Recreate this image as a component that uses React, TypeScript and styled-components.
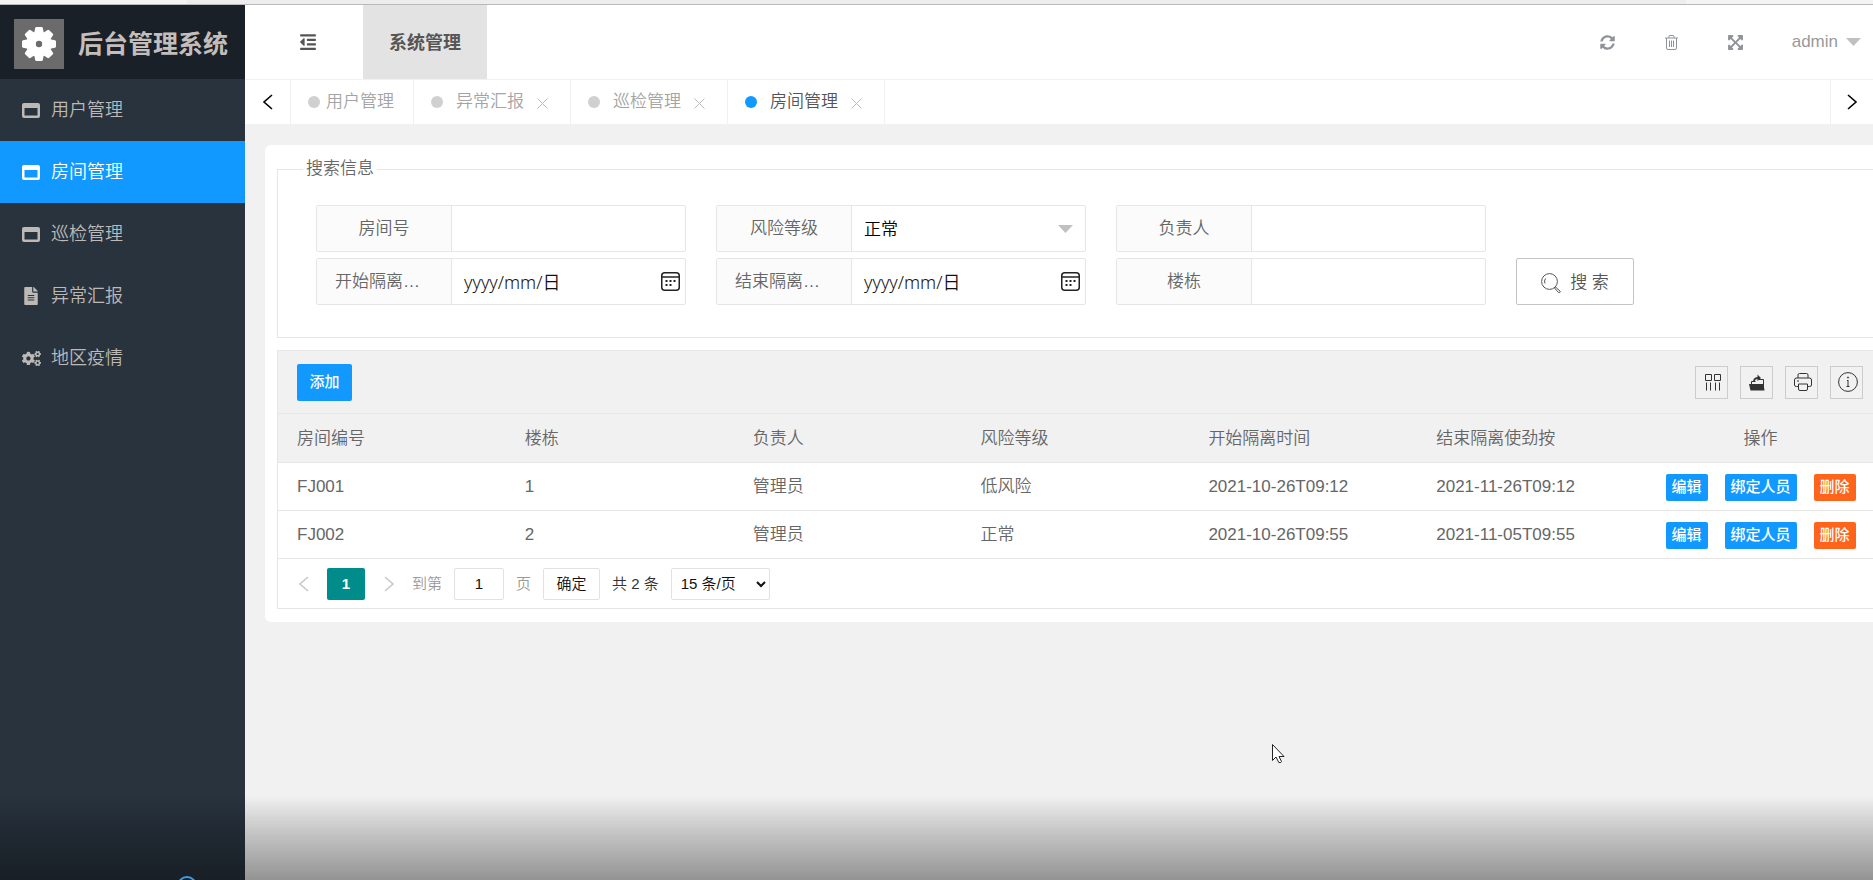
import React from 'react';
import styled, { createGlobalStyle, css } from 'styled-components';
import { FaCogs, FaExpandArrowsAlt, FaFileAlt, FaOutdent, FaSyncAlt } from 'react-icons/fa';

const GlobalStyle = createGlobalStyle`
  *, *::before, *::after { box-sizing: border-box; }
  body {
    margin: 0;
    background: #f1f1f1;
    color: #666;
    font-family: 'Liberation Sans', 'Noto Sans CJK SC', sans-serif;
    font-size: 17px;
    font-weight: 350;
    line-height: 24px;
    overflow: hidden;
  }
  button, input, select { font: inherit; margin: 0; }
  button { cursor: pointer; }
  svg { display: block; flex: none; }
`;

const Page = styled.div`
  display: flex;
  flex-direction: column;
  min-height: 100vh;
`;

const WindowEdge = styled.div`
  height: 5px;
  background: linear-gradient(90deg, #f4f4f4 10%, #ededed 10%, #ededed 90%, #f4f4f4 90%);
  border-bottom: 1px solid #b9b9b9;
`;

const Shell = styled.div`
  display: flex;
  flex: 1;
`;

/* ---------- sidebar ---------- */

const Sidebar = styled.aside`
  width: 245px;
  flex: none;
  background: #28333e;
`;

const Brand = styled.h1`
  display: flex;
  align-items: center;
  gap: 14px;
  height: 74px;
  margin: 0;
  padding: 4px 0 0 14px;
  background: #192027;
  color: #c3bebb;
  font-size: 25px;
  font-weight: 700;
  line-height: 36px;
  white-space: nowrap;
`;

const BrandMark = styled.span`
  display: grid;
  place-items: center;
  width: 50px;
  height: 50px;
  background: #6b6b6b;
`;

const MenuLink = styled.a<{ $active?: boolean }>`
  display: flex;
  align-items: center;
  height: 62px;
  padding-left: 22px;
  color: ${p => (p.$active ? '#fff' : '#bdb9b6')};
  background: ${p => (p.$active ? '#1299ff' : 'transparent')};
  font-size: 18px;
  text-decoration: none;
`;

const MenuIcon = styled.span`
  width: 29px;
`;

/* ---------- header ---------- */

const Main = styled.main`
  flex: 1;
  min-width: 0;
`;

const Header = styled.header`
  display: flex;
  align-items: stretch;
  height: 75px;
  background: #fff;
  border-bottom: 1px solid #f1f1f1;
`;

const IconButton = styled.button`
  display: grid;
  place-items: center;
  width: 64px;
  padding: 0;
  border: 0;
  background: none;
  color: #8f9399;
`;

const FoldButton = styled(IconButton)`
  width: 118px;
  padding-left: 8px;
  color: #555;
`;

const ModuleTab = styled.a`
  display: flex;
  align-items: center;
  justify-content: center;
  width: 124px;
  padding-top: 2px;
  background: #e3e3e3;
  color: #555;
  font-size: 18px;
  font-weight: 700;
  text-decoration: none;
`;

const HeaderTools = styled.div`
  display: flex;
  align-items: stretch;
  margin-left: auto;
  padding-right: 12px;
`;

const UserButton = styled.button`
  display: flex;
  align-items: center;
  gap: 8px;
  margin-left: 24px;
  padding: 0;
  border: 0;
  background: none;
  color: #999;
`;

/* ---------- page tabs ---------- */

const TabBar = styled.nav`
  display: flex;
  height: 44px;
  background: #fff;
`;

const TabArrow = styled.button<{ $side: 'left' | 'right' }>`
  display: grid;
  place-items: center;
  width: ${p => (p.$side === 'left' ? 46 : 43)}px;
  padding: 0;
  border: 0 solid #f1f1f1;
  border-${p => (p.$side === 'left' ? 'right' : 'left')}-width: 1px;
  margin-left: ${p => (p.$side === 'right' ? 'auto' : 0)};
  background: none;
  color: #000;
`;

const Tab = styled.div<{ $active?: boolean; $home?: boolean }>`
  display: flex;
  align-items: center;
  gap: ${p => (p.$home ? 6 : 13)}px;
  padding: 0 ${p => (p.$home ? 19 : 22)}px 0 17px;
  border-right: 1px solid #f1f1f1;
  color: ${p => (p.$active ? '#555' : '#a4a4a4')};
`;

const TabLink = styled.a`
  color: inherit;
  text-decoration: none;
`;

const Dot = styled.span<{ $active?: boolean }>`
  width: 12px;
  height: 12px;
  border-radius: 50%;
  background: ${p => (p.$active ? '#1299ff' : '#d0d0d0')};
`;

const CloseButton = styled.button`
  padding: 2px 0 0;
  border: 0;
  background: none;
  color: #bbb;
`;

/* ---------- content ---------- */

const Card = styled.section`
  margin: 21px 0 0 20px;
  padding: 12px 0 13px 12px;
  background: #fff;
  border-radius: 6px 0 0 6px;
`;

const SearchBox = styled.fieldset`
  margin: 0;
  padding: 24px 0 32px 38px;
  border: 1px solid #e6e6e6;
  border-right: 0;
`;

const Legend = styled.legend`
  margin-left: -13px;
  padding: 0 3px;
`;

const SearchGrid = styled.form`
  display: grid;
  grid-template-columns: repeat(3, 370px) auto;
  justify-content: start;
  gap: 6px 30px;
`;

const Field = styled.div`
  display: flex;
  height: 47px;
  border: 1px solid #e6e6e6;
  border-radius: 2px;
`;

const FieldLabel = styled.label`
  width: 135px;
  flex: none;
  padding: 0 18px;
  overflow: hidden;
  border-right: 1px solid #e6e6e6;
  background: #fbfbfb;
  line-height: 46px;
  text-align: center;
  text-overflow: ellipsis;
  white-space: nowrap;
`;

const Control = styled.div`
  position: relative;
  display: flex;
  flex: 1;
  min-width: 0;
`;

const controlText = css`
  width: 100%;
  min-width: 0;
  padding: 2px 12px 0;
  border: 0;
  outline: 0;
  background: none;
  color: #000;
`;

const TextInput = styled.input`
  ${controlText}
`;

const DateInput = styled.input`
  ${controlText}
  padding-top: 0;
  font-family: 'Noto Sans', 'Noto Sans CJK SC', sans-serif;
  font-size: 18px;
  &::placeholder { color: #111; opacity: 1; }
`;

const PlainSelect = styled.select`
  ${controlText}
  appearance: none;
`;

const SelectArrow = styled.span`
  position: absolute;
  top: 19px;
  right: 12px;
  color: #c2c2c2;
  pointer-events: none;
`;

const CalendarButton = styled.button`
  position: absolute;
  top: 13px;
  right: 5px;
  padding: 0;
  border: 0;
  background: none;
  color: #222;
`;

const SearchButton = styled.button`
  display: flex;
  align-items: center;
  justify-content: center;
  gap: 9px;
  grid-column: 4;
  width: 118px;
  height: 47px;
  padding: 3px 0 0;
  border: 1px solid #c4c4c4;
  border-radius: 2px;
  background: #fff;
  color: #555;
`;

const TableBox = styled.div`
  margin-top: 12px;
  border: 1px solid #e6e6e6;
  border-right: 0;
`;

const Toolbar = styled.div`
  display: flex;
  align-items: center;
  height: 63px;
  padding: 0 10px 0 19px;
  background: #f1f1f1;
  border-bottom: 1px solid #e6e6e6;
`;

const AddButton = styled.button`
  width: 55px;
  height: 37px;
  padding: 0;
  border: 0;
  border-radius: 2px;
  background: #1299ff;
  color: #fff;
  font-size: 15px;
  font-weight: 500;
`;

const ToolGroup = styled.div`
  display: flex;
  gap: 12px;
  margin-left: auto;
`;

const ToolButton = styled.button`
  display: grid;
  place-items: center;
  width: 33px;
  height: 33px;
  padding: 0 0 0 2px;
  border: 1px solid #ccc;
  background: none;
  color: #333;
`;

const DataTable = styled.table`
  width: 100%;
  border-collapse: separate;
  border-spacing: 0;
  table-layout: fixed;
`;

const HeadCell = styled.th<{ $center?: boolean }>`
  height: 49px;
  padding: ${p => (p.$center ? '2px 12px 0 15px' : '2px 0 0 19px')};
  background: #f1f1f1;
  border-bottom: 1px solid #e6e6e6;
  font-weight: 350;
  text-align: ${p => (p.$center ? 'center' : 'left')};
`;

const Cell = styled.td`
  height: 48px;
  padding: 0 0 0 19px;
  border-bottom: 1px solid #e6e6e6;
`;

const ActionCell = styled(Cell)`
  padding: 1px 12px 0 15px;
`;

const Actions = styled.div`
  display: flex;
  justify-content: center;
  gap: 17px;
`;

const RowButton = styled.button<{ $danger?: boolean }>`
  height: 27px;
  padding: 0 6px;
  border: 0;
  border-radius: 2px;
  background: ${p => (p.$danger ? '#ff641c' : '#1299ff')};
  color: #fff;
  font-size: 15px;
  font-weight: 500;
  line-height: 24px;
  white-space: nowrap;
`;

const Pager = styled.div`
  display: flex;
  align-items: center;
  gap: 12px;
  height: 49px;
  padding-left: 18px;
  color: #333;
  font-size: 15px;
`;

const PagerArrow = styled.button`
  display: grid;
  place-items: center;
  width: 14px;
  padding: 0;
  border: 0;
  background: none;
  color: #c8c8c8;
`;

const CurrentPage = styled.button`
  width: 38px;
  height: 32px;
  margin: 0 4px 0 5px;
  padding: 0;
  border: 0;
  border-radius: 2px;
  background: #008c8a;
  color: #fff;
  font-weight: 700;
`;

const pagerBox = css`
  height: 32px;
  border: 1px solid #e2e2e2;
  border-radius: 2px;
  background: #fff;
  color: #111;
`;

const PageInput = styled.input`
  ${pagerBox}
  width: 50px;
  padding: 0;
  text-align: center;
`;

const JumpLabel = styled.label`
  display: flex;
  align-items: center;
  gap: 12px;
  margin-left: 5px;
  color: #999;
`;

const ConfirmButton = styled.button`
  ${pagerBox}
  width: 57px;
  padding: 0;
`;

const PageSize = styled.select`
  ${pagerBox}
  width: 99px;
  padding: 0 0 0 5px;
`;

/* ---------- overlays ---------- */

const BottomShade = styled.div`
  position: fixed;
  right: 0;
  bottom: 0;
  left: 0;
  height: 84px;
  background: linear-gradient(rgba(0, 0, 0, 0), rgba(0, 0, 0, 0.17) 40%, rgba(0, 0, 0, 0.39));
  pointer-events: none;
`;

const ProgressKnob = styled.div`
  position: fixed;
  bottom: -16px;
  left: 177px;
  width: 20px;
  height: 20px;
  border: 2px solid #3f9be6;
  border-radius: 50%;
`;

const Pointer = styled.div`
  position: fixed;
  top: 744px;
  left: 1272px;
  pointer-events: none;
`;

/* ---------- icons ---------- */

const GearIcon = () => (
  <svg width="34" height="34" viewBox="-17 -17 34 34">
    <g fill="#fff">
      <circle r="12.6" />
      {[0, 45, 90, 135].map(a => (
        <path key={a} transform={`rotate(${a})`} d="M-2.6 -17h5.2q1 0 1.2 1l1 5v22l-1 5q-.2 1-1.2 1h-5.2q-1 0-1.2-1l-1-5v-22l1-5q.2-1 1.2-1z" />
      ))}
    </g>
    <circle r="3.2" fill="#6b6b6b" />
  </svg>
);

const WindowIcon = () => (
  <svg width="18" height="15" viewBox="0 0 18 15" fill="currentColor">
    <path fillRule="evenodd" d="M2 0h14a2 2 0 0 1 2 2v11a2 2 0 0 1-2 2H2a2 2 0 0 1-2-2V2a2 2 0 0 1 2-2zm.5 5v7.500h13V5z" />
  </svg>
);

const TrashIcon = () => (
  <svg width="13" height="15" viewBox="0 0 13 15" fill="none" stroke="currentColor">
    <path d="M0 3h13M4 3V1.500q0-1 1-1h3q1 0 1 1V3M1.500 3v10q0 1.500 1.500 1.500h7q1.500 0 1.500-1.500V3M4.500 5.500v6.500M6.500 5.500v6.500M8.500 5.500v6.500" />
  </svg>
);

const Triangle = () => (
  <svg width="15" height="8" viewBox="0 0 15 8" fill="#c0c0c0">
    <path d="M0 0h15L7.500 8z" />
  </svg>
);

const Chevron = ({ right = false }: { right?: boolean }) => (
  <svg width="16" height="16" viewBox="0 0 16 16" fill="none" stroke="currentColor" strokeWidth="1.600">
    <path d={right ? 'M4 1l8 7-8 7' : 'M12 1L4 8l8 7'} />
  </svg>
);

const CloseIcon = () => (
  <svg width="11" height="11" viewBox="0 0 11 11" fill="none" stroke="currentColor">
    <path d="M.5 .5l10 10M10.500 .5l-10 10" />
  </svg>
);

const CalendarIcon = () => (
  <svg width="19" height="19" viewBox="0 0 19 19" fill="none" stroke="currentColor" strokeWidth="1.500">
    <rect x=".75" y=".75" width="17.500" height="17.500" rx="3" />
    <path d="M1 5h17" />
    <path d="M4.500 9h2M8.500 9h2M12.500 9h2M4.500 13h2M8.500 13h2" strokeWidth="2" />
  </svg>
);

const SearchIcon = () => (
  <svg width="20" height="20" viewBox="0 0 20 20" fill="none" stroke="currentColor">
    <circle cx="8.500" cy="8.500" r="7.900" />
    <path d="M4 10.500A5 5 0 0 1 4.500 5.500M14.500 14l4.500 4q.6 1-.2 1.500t-1.300 0L13.500 15z" />
  </svg>
);

const ColumnsIcon = () => (
  <svg width="18" height="18" viewBox="0 0 18 18" fill="none" stroke="currentColor">
    <path d="M1.500 1.500h6v6h-6zM10.500 1.500h6v6h-6zM2.500 9.500v8M6.500 9.500v8M11.500 9.500v8M15.500 9.500v8" />
  </svg>
);

const ExportIcon = () => (
  <svg width="17" height="17" viewBox="0 0 17 17">
    <path d="M2.500 10V7.500h4M9.500 5.500h5V15" fill="none" stroke="currentColor" />
    <path d="M0 10h14.500l1 6.500H1.500zM4 8q0-4.500 4.500-5V.5L12 4 8.500 7V5Q6 5 5.500 8z" fill="currentColor" />
  </svg>
);

const PrintIcon = () => (
  <svg width="18" height="18" viewBox="0 0 18 18" fill="none" stroke="currentColor">
    <path d="M4 5V2q0-1.500 1.500-1.500h7Q14 .5 14 2v3M4 13.500H2.500Q.5 13.500.5 12V7q0-2 2-2h13q2 0 2 2v5q0 1.500-2 1.500H14M4.500 11h9v5q0 1.500-1.500 1.500H6q-1.500 0-1.500-1.500zM3 8h2" />
  </svg>
);

const InfoIcon = () => (
  <svg width="20" height="20" viewBox="0 0 20 20" fill="none" stroke="currentColor">
    <circle cx="10" cy="10" r="9.400" />
    <path d="M10 8v7M9 8.500h1M8.500 14.500h3" />
    <circle cx="10" cy="5.500" r=".6" />
  </svg>
);

const PointerIcon = () => (
  <svg width="13" height="20" viewBox="0 0 13 20" fill="#fff" stroke="#222">
    <path d="M.5 .5v16l3.500-3.500 2.800 5.500h2l.7-1-2.500-5h5z" />
  </svg>
);

/* ---------- data ---------- */

const menu = [
  { text: '用户管理', icon: <WindowIcon /> },
  { text: '房间管理', icon: <WindowIcon />, active: true },
  { text: '巡检管理', icon: <WindowIcon /> },
  { text: '异常汇报', icon: <FaFileAlt size={18} viewBox="0 0 384 512" width={15} /> },
  { text: '地区疫情', icon: <FaCogs size={19} /> },
];

const tabs = ['用户管理', '异常汇报', '巡检管理', '房间管理'];

const columns = ['房间编号', '楼栋', '负责人', '风险等级', '开始隔离时间', '结束隔离使劲按'];

const rows = [
  ['FJ001', '1', '管理员', '低风险', '2021-10-26T09:12', '2021-11-26T09:12'],
  ['FJ002', '2', '管理员', '正常', '2021-10-26T09:55', '2021-11-05T09:55'],
];

const TextField = ({ id, label }: { id: string; label: string }) => (
  <Field>
    <FieldLabel htmlFor={id}>{label}</FieldLabel>
    <Control>
      <TextInput id={id} type="text" />
    </Control>
  </Field>
);

const DateField = ({ id, label }: { id: string; label: string }) => (
  <Field>
    <FieldLabel htmlFor={id}>{label}</FieldLabel>
    <Control>
      <DateInput id={id} type="text" placeholder="yyyy/mm/日" />
      <CalendarButton type="button" aria-label="选择日期">
        <CalendarIcon />
      </CalendarButton>
    </Control>
  </Field>
);

export default function App() {
  return (
    <Page>
      <GlobalStyle />
      <WindowEdge />
      <Shell>
        <Sidebar>
          <Brand>
            <BrandMark>
              <GearIcon />
            </BrandMark>
            后台管理系统
          </Brand>
          <nav>
            {menu.map(m => (
              <MenuLink key={m.text} href="#" $active={m.active}>
                <MenuIcon>{m.icon}</MenuIcon>
                {m.text}
              </MenuLink>
            ))}
          </nav>
        </Sidebar>
        <Main>
          <Header>
            <FoldButton aria-label="收起菜单">
              <FaOutdent size={18} />
            </FoldButton>
            <ModuleTab href="#">系统管理</ModuleTab>
            <HeaderTools>
              <IconButton aria-label="刷新">
                <FaSyncAlt size={15} />
              </IconButton>
              <IconButton aria-label="清理">
                <TrashIcon />
              </IconButton>
              <IconButton aria-label="全屏">
                <FaExpandArrowsAlt size={17} />
              </IconButton>
              <UserButton>
                admin
                <Triangle />
              </UserButton>
            </HeaderTools>
          </Header>
          <TabBar>
            <TabArrow $side="left" aria-label="向左">
              <Chevron />
            </TabArrow>
            {tabs.map((t, i) => {
              const active = i === tabs.length - 1;
              return (
                <Tab key={t} $home={i === 0} $active={active}>
                  <Dot $active={active} />
                  <TabLink href="#">{t}</TabLink>
                  {i > 0 && (
                    <CloseButton aria-label="关闭">
                      <CloseIcon />
                    </CloseButton>
                  )}
                </Tab>
              );
            })}
            <TabArrow $side="right" aria-label="向右">
              <Chevron right />
            </TabArrow>
          </TabBar>
          <Card>
            <SearchBox>
              <Legend>搜索信息</Legend>
              <SearchGrid>
                <TextField id="room" label="房间号" />
                <Field>
                  <FieldLabel htmlFor="risk">风险等级</FieldLabel>
                  <Control>
                    <PlainSelect id="risk" defaultValue="正常">
                      <option>正常</option>
                    </PlainSelect>
                    <SelectArrow>
                      <Triangle />
                    </SelectArrow>
                  </Control>
                </Field>
                <TextField id="owner" label="负责人" />
                <span />
                <DateField id="start" label="开始隔离时间" />
                <DateField id="end" label="结束隔离时间" />
                <TextField id="building" label="楼栋" />
                <SearchButton type="button">
                  <SearchIcon />
                  搜 索
                </SearchButton>
              </SearchGrid>
            </SearchBox>
            <TableBox>
              <Toolbar>
                <AddButton>添加</AddButton>
                <ToolGroup>
                  <ToolButton aria-label="筛选列">
                    <ColumnsIcon />
                  </ToolButton>
                  <ToolButton aria-label="导出">
                    <ExportIcon />
                  </ToolButton>
                  <ToolButton aria-label="打印">
                    <PrintIcon />
                  </ToolButton>
                  <ToolButton aria-label="提示">
                    <InfoIcon />
                  </ToolButton>
                </ToolGroup>
              </Toolbar>
              <DataTable>
                <thead>
                  <tr>
                    {columns.map(c => (
                      <HeadCell key={c}>{c}</HeadCell>
                    ))}
                    <HeadCell $center>操作</HeadCell>
                  </tr>
                </thead>
                <tbody>
                  {rows.map(r => (
                    <tr key={r[0]}>
                      {r.map((v, i) => (
                        <Cell key={i}>{v}</Cell>
                      ))}
                      <ActionCell>
                        <Actions>
                          <RowButton>编辑</RowButton>
                          <RowButton>绑定人员</RowButton>
                          <RowButton $danger>删除</RowButton>
                        </Actions>
                      </ActionCell>
                    </tr>
                  ))}
                </tbody>
              </DataTable>
              <Pager>
                <PagerArrow aria-label="上一页">
                  <Chevron />
                </PagerArrow>
                <CurrentPage>1</CurrentPage>
                <PagerArrow aria-label="下一页">
                  <Chevron right />
                </PagerArrow>
                <JumpLabel>
                  到第
                  <PageInput type="text" defaultValue="1" />
                  页
                </JumpLabel>
                <ConfirmButton>确定</ConfirmButton>
                <span>共 2 条</span>
                <PageSize aria-label="每页条数" defaultValue="15 条/页">
                  <option>15 条/页</option>
                </PageSize>
              </Pager>
            </TableBox>
          </Card>
        </Main>
      </Shell>
      <BottomShade />
      <ProgressKnob />
      <Pointer>
        <PointerIcon />
      </Pointer>
    </Page>
  );
}
